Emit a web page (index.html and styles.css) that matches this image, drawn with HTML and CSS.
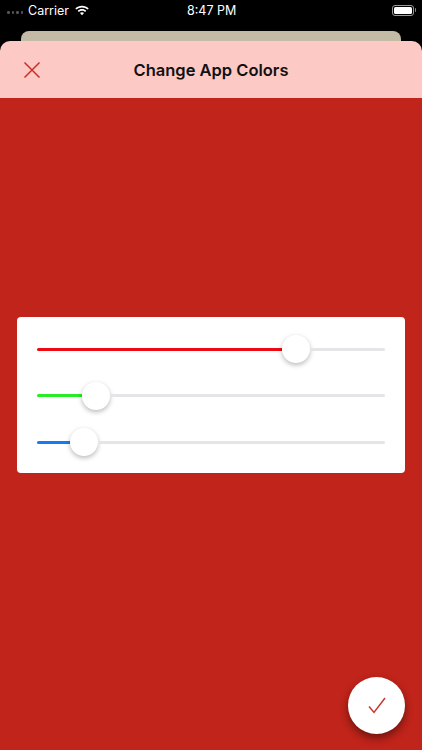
FILE: index.html
```html
<!DOCTYPE html>
<html lang="en">
<head>
    <meta charset="UTF-8">
    <meta name="viewport" content="width=device-width, initial-scale=1.0">
    <title>Change App Colors</title>
    <link rel="stylesheet" href="styles.css">
</head>
<body>
    <div class="container">
        <!-- Status bar -->
        <div class="status-bar">
            <div class="status-left">
                <div class="signal">
                    <span class="signal-dot"></span>
                    <span class="signal-dot"></span>
                    <span class="signal-dot"></span>
                    <span class="signal-dot"></span>
                </div>
                <span class="carrier">Carrier</span>
                <svg class="wifi-icon" width="16" height="11" viewBox="0 0 17 12">
                    <path d="M8.500 2.600c2.300 0 4.500.9 6.100 2.400l1.200-1.300C13.900 1.800 11.300.7 8.500.7S3.100 1.800 1.200 3.700L2.400 5c1.600-1.500 3.800-2.400 6.100-2.400z" fill="#fff"/>
                    <path d="M8.500 6.200c1.300 0 2.500.5 3.400 1.300l1.300-1.300C11.900 5 10.300 4.300 8.500 4.300S5.100 5 3.800 6.200l1.300 1.300c.9-.8 2.100-1.300 3.400-1.300z" fill="#fff"/>
                    <path d="M8.500 7.900c-.9 0-1.600.3-2.200.8l2.200 2.500 2.200-2.500c-.6-.5-1.300-.8-2.200-.8z" fill="#fff"/>
                </svg>
            </div>
            <span class="clock">8:47 PM</span>
            <div class="battery">
                <div class="battery-body">
                    <div class="battery-level"></div>
                </div>
                <div class="battery-cap"></div>
            </div>
        </div>

        <div class="sheet-behind"></div>

        <div class="sheet">
            <!-- Header -->
            <header class="header">
                <svg class="close-icon" width="18" height="18" viewBox="0 0 18 18">
                    <path d="M1.500 1.500L16.500 16.500M16.500 1.500L1.500 16.500" stroke="#c8302a" stroke-width="1.500" fill="none"/>
                </svg>
                <h1 class="title">Change App Colors</h1>
            </header>

            <!-- Main content -->
            <main class="main-content">
                <div class="slider-card">
                    <div class="slider">
                        <div class="slider-fill fill-red" style="width: 245px"></div>
                        <div class="slider-thumb"></div>
                        <div class="slider-rest"></div>
                    </div>
                    <div class="slider">
                        <div class="slider-fill fill-green" style="width: 45px"></div>
                        <div class="slider-thumb"></div>
                        <div class="slider-rest"></div>
                    </div>
                    <div class="slider">
                        <div class="slider-fill fill-blue" style="width: 33px"></div>
                        <div class="slider-thumb"></div>
                        <div class="slider-rest"></div>
                    </div>
                </div>
            </main>
        </div>

        <button class="confirm-btn">
            <svg width="18" height="17" viewBox="0 0 18 17">
                <path d="M1 9.500L6 15.500L17 1" stroke="#c8302a" stroke-width="1.400" fill="none"/>
            </svg>
        </button>
    </div>
</body>
</html>
```

FILE: styles.css
```css
* {
    margin: 0;
    padding: 0;
    box-sizing: border-box;
}

body {
    font-family: Inter, "Liberation Sans", sans-serif;
    background-color: #000;
    overflow: hidden;
}

.container {
    position: relative;
    width: 422px;
    height: 750px;
    display: flex;
    flex-direction: column;
}

/* Status bar */
.status-bar {
    height: 31px;
    padding: 0 6px 11px 7px;
    display: flex;
    justify-content: space-between;
    align-items: center;
    position: relative;
    color: #fff;
    font-size: 12.500px;
}

.status-left {
    display: flex;
    align-items: center;
}

.signal {
    display: flex;
    gap: 2px;
    margin-right: 5px;
    margin-top: 5px;
}

.signal-dot {
    width: 2.500px;
    height: 2.500px;
    border-radius: 50%;
    background-color: #555;
}

.carrier {
    margin-right: 5px;
}

.clock {
    position: absolute;
    left: 187px;
    top: 3px;
}

.battery {
    display: flex;
    align-items: center;
}

.battery-body {
    width: 22px;
    height: 11px;
    border: 1px solid #999;
    border-radius: 3px;
    padding: 1px;
}

.battery-level {
    height: 100%;
    background-color: #fff;
    border-radius: 1.500px;
}

.battery-cap {
    width: 1.500px;
    height: 4px;
    margin-left: 1px;
    background-color: #888;
    border-radius: 0 1px 1px 0;
}

.sheet-behind {
    height: 10px;
    margin: 0 21px;
    background-color: #c4bba6;
    border-radius: 8px 8px 0 0;
}

.sheet {
    flex: 1;
    display: flex;
    flex-direction: column;
    border-radius: 10px 10px 0 0;
    overflow: hidden;
}

/* Header */
.header {
    height: 57px;
    flex-shrink: 0;
    background-color: #fdc9c5;
    padding-left: 23px;
    display: flex;
    align-items: center;
    position: relative;
}

.title {
    position: absolute;
    left: 0;
    right: 0;
    text-align: center;
    font-size: 16.500px;
    font-weight: 600;
    color: #111;
}

/* Main content */
.main-content {
    flex: 1;
    background-color: #c1241a;
    padding: 219px 17px 0;
}

.slider-card {
    height: 156px;
    background-color: #fff;
    border-radius: 4px;
    padding: 18px 20px 0;
    display: flex;
    flex-direction: column;
    gap: 18.500px;
}

.slider {
    height: 28px;
    display: flex;
    align-items: center;
}

.slider-fill {
    height: 3px;
    border-radius: 2px 0 0 2px;
}

.fill-red {
    background-color: #ee0a12;
}

.fill-green {
    background-color: #28ec24;
}

.fill-blue {
    background-color: #147cf0;
}

.slider-thumb {
    width: 28px;
    height: 28px;
    flex-shrink: 0;
    border-radius: 50%;
    background-color: #fff;
    box-shadow: 0 2px 5px rgba(0, 0, 0, 0.28);
}

.slider-rest {
    flex: 1;
    height: 3px;
    background-color: #e5e5e8;
    border-radius: 0 2px 2px 0;
}

/* Confirm button */
.confirm-btn {
    position: absolute;
    left: 348px;
    top: 677px;
    width: 57px;
    height: 57px;
    border: none;
    border-radius: 50%;
    background-color: #fff;
    box-shadow: 0 4px 9px rgba(0, 0, 0, 0.45);
    display: flex;
    align-items: center;
    justify-content: center;
}
```
